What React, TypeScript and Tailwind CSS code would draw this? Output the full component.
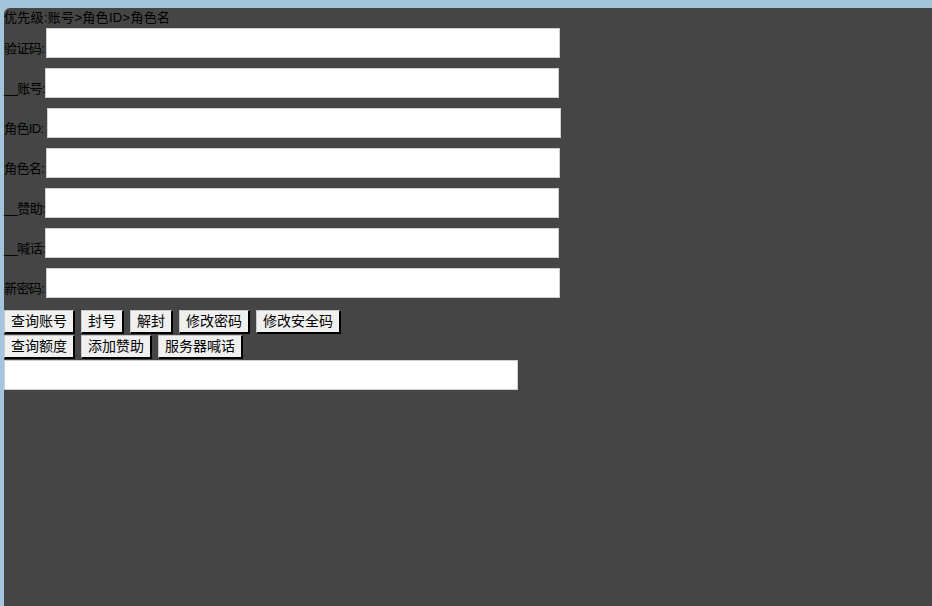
import React from "react";

const font = { fontFamily: '"Liberation Sans", "Noto Sans CJK SC", sans-serif' };

const rows = [
  { label: "验证码:", lw: "w-[42px]" },
  { label: "__账号:", lw: "w-[41px]" },
  { label: "角色ID:", lw: "w-[43px]" },
  { label: "角色名:", lw: "w-[42px]" },
  { label: "__赞助:", lw: "w-[41px]" },
  { label: "__喊话:", lw: "w-[41px]" },
  { label: "新密码:", lw: "w-[42px]" },
];

function Btn({ children }: { children: React.ReactNode }) {
  return (
    <button className="h-[24px] px-[6px] bg-[#f0f0f0] border-t border-l border-t-[#c8c8c8] border-l-[#c8c8c8] border-r-2 border-b-2 border-r-black border-b-black text-[14px] leading-[19px] text-black whitespace-nowrap">
      {children}
    </button>
  );
}

export default function App() {
  return (
    <div className="w-[932px] h-[606px] bg-[#a3c6dc] pt-[8px] pl-[4px] overflow-hidden" style={font}>
      <div className="h-full bg-[#454545] rounded-tl-[6px] text-black text-[13px]">
        <div className="h-[20px] leading-[20px] whitespace-nowrap tracking-[0.3px]">优先级:账号&gt;角色ID&gt;角色名</div>
        {rows.map((r) => (
          <div key={r.label} className="flex items-end h-[30px] mb-[10px]">
            <span className={`${r.lw} shrink-0 relative z-10 leading-[16px] mb-[1px] whitespace-nowrap tracking-[-0.6px]`}>{r.label}</span>
            <input className="w-[514px] h-[30px] bg-white border border-[#cfcfcf] outline-none" />
          </div>
        ))}
        <div className="flex gap-[6px] mt-[12px]">
          <Btn>查询账号</Btn>
          <Btn>封号</Btn>
          <Btn>解封</Btn>
          <Btn>修改密码</Btn>
          <Btn>修改安全码</Btn>
        </div>
        <div className="flex gap-[6px] mt-[1px]">
          <Btn>查询额度</Btn>
          <Btn>添加赞助</Btn>
          <Btn>服务器喊话</Btn>
        </div>
        <input className="block w-[514px] h-[30px] mt-[1px] bg-white border border-[#cfcfcf] outline-none" />
      </div>
    </div>
  );
}
